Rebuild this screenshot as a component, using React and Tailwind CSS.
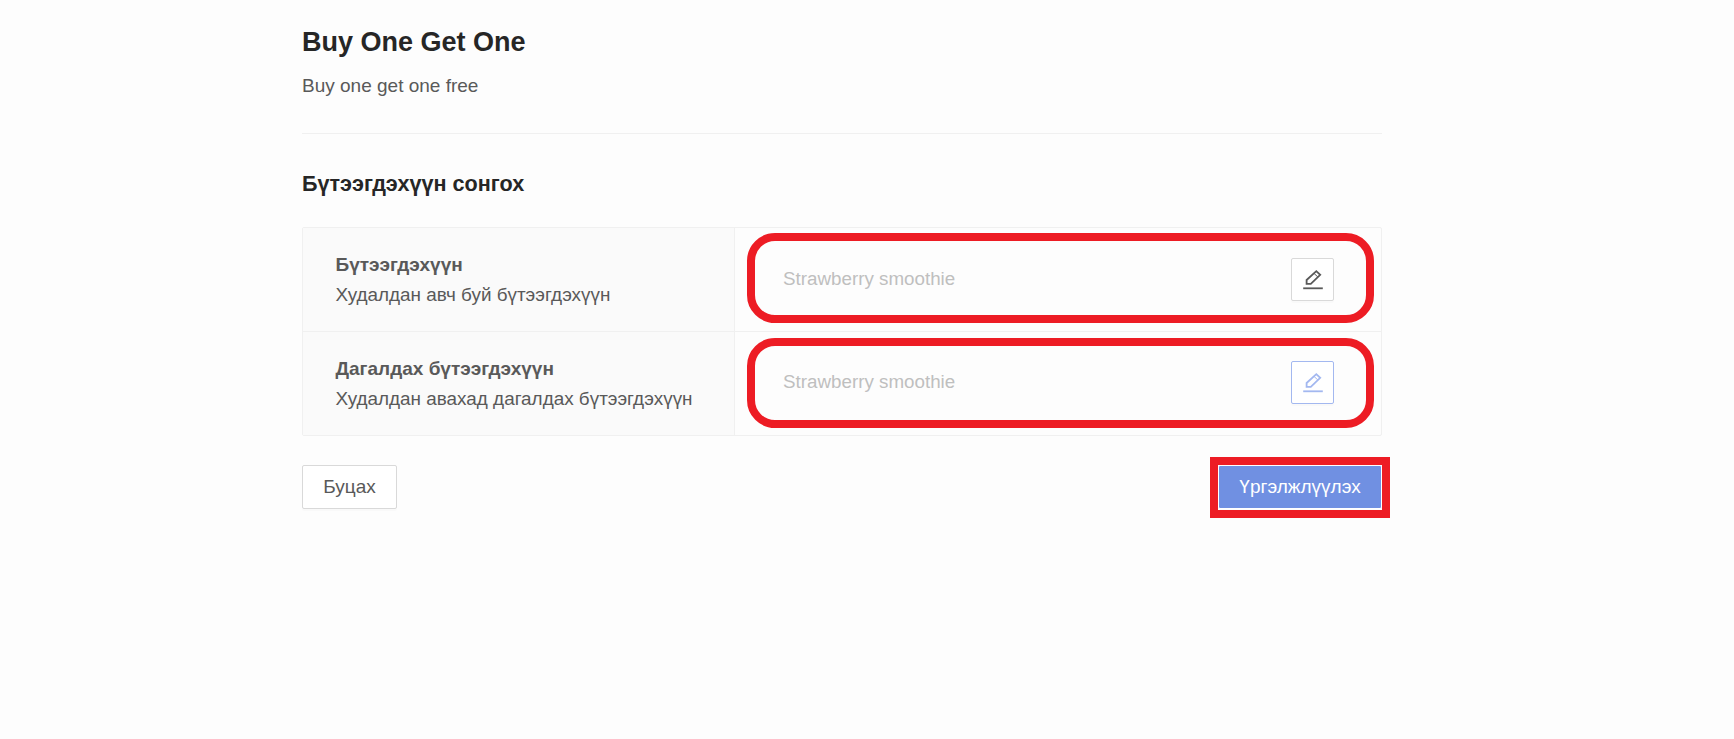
import React from 'react';

const PencilIcon = ({ className }) => (
  <svg viewBox="0 0 24 24" width="24" height="24" fill="none" stroke="currentColor" strokeWidth="1.8" className={className}>
    <path d="M5.6 15.8 V12 L15.3 3.2 L19.2 6.8 L9.8 15.8 Z" strokeLinejoin="miter" />
    <path d="M13 5.4 L16.9 9" strokeWidth="1" />
    <path d="M2.2 20.3 H21.8" />
  </svg>
);

const Row = ({ title, desc, muted, last }) => (
  <div className={`flex ${last ? 'h-[103px]' : 'h-[104px] border-b border-[#f0f0f0]'}`}>
    <div className="w-[432px] shrink-0 bg-[#fafafa] border-r border-[#f0f0f0] pl-[32.5px] flex flex-col justify-center">
      <div className="text-[19px] leading-[30px] font-bold text-[#595959]">{title}</div>
      <div className="text-[18.9px] leading-[30px] text-[#595959]">{desc}</div>
    </div>
    <div className={`relative flex-1 flex items-center justify-between pl-[48px] pr-[47px] ${last ? 'pb-[2px]' : ''}`}>
      <span className="text-[18.8px] text-[#bfbfbf]">Strawberry smoothie</span>
      <button className={`w-[43px] h-[43px] flex items-center justify-center rounded-[2px] border bg-white shadow-[0_2px_0_rgba(0,0,0,0.015)] ${muted ? 'border-[#a3b8f0] text-[#a3b8f0]' : 'border-[#d9d9d9] text-[#595959]'}`}>
        <PencilIcon />
      </button>
      <div className={`absolute left-[12px] right-[7px] h-[90px] border-[8px] border-[#ed1c24] rounded-[28px] pointer-events-none ${last ? 'top-[6px]' : 'top-[5px]'}`} />
    </div>
  </div>
);

export default function App() {
  return (
    <div className="min-h-[739px] bg-[#fdfdfd] font-['Liberation_Sans',Arial,sans-serif]">
      <div className="w-[1080px] ml-[302px] pt-[26px]">
        <h1 className="text-[27px] leading-[32px] font-bold text-[#262626]">Buy One Get One</h1>
        <p className="mt-[14px] text-[19px] leading-[28px] text-[#595959]">Buy one get one free</p>
        <div className="mt-[33px] border-t border-[#f0f0f0]" />
        <h2 className="mt-[36px] text-[21.6px] leading-[28px] font-bold text-[#262626]">Бүтээгдэхүүн сонгох</h2>
        <div className="mt-[29px] border border-[#f0f0f0] rounded-[2px]">
          <Row title="Бүтээгдэхүүн" desc="Худалдан авч буй бүтээгдэхүүн" />
          <Row title="Дагалдах бүтээгдэхүүн" desc="Худалдан авахад дагалдах бүтээгдэхүүн" muted last />
        </div>
        <div className="mt-[29px] flex items-center justify-between">
          <button className="h-[44px] w-[95px] rounded-[2px] border border-[#d9d9d9] bg-white text-[19px] text-[#595959] shadow-[0_2px_0_rgba(0,0,0,0.015)]">Буцах</button>
          <div className="relative">
            <button className="block h-[44px] w-[164px] rounded-[2px] border border-white bg-[#7090e2] text-[19px] text-white">Үргэлжлүүлэх</button>
            <div className="absolute -left-[8px] -right-[8px] -top-[8px] -bottom-[9px] border-[8px] border-[#ed1c24] pointer-events-none" />
          </div>
        </div>
      </div>
    </div>
  );
}
